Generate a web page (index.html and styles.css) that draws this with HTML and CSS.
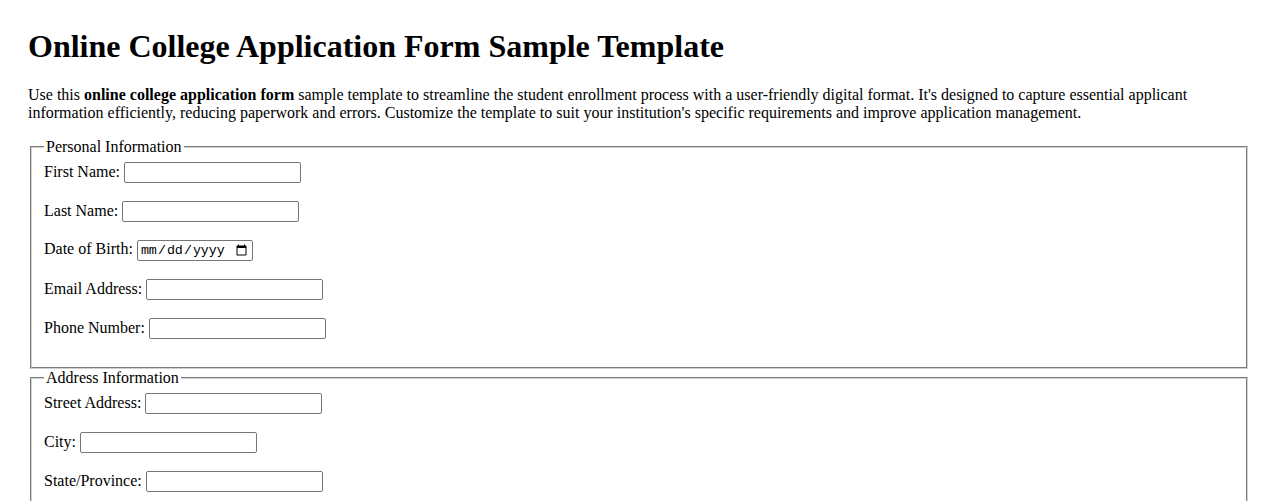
FILE: index.html
```html
<!DOCTYPE html>
<html lang="en">
<head>
<meta charset="utf-8">
<title>Online College Application Form Sample Template</title>
<link rel="stylesheet" href="styles.css">
</head>
<body class="page">
<h1 class="title">Online College Application Form Sample Template</h1>
<p class="intro">Use this <strong>online college application form</strong> sample template to streamline the student enrollment process with a user-friendly digital format. It's designed to capture essential applicant information efficiently, reducing paperwork and errors. Customize the template to suit your institution's specific requirements and improve application management.</p>
<form class="form">
<fieldset class="group">
<legend class="group-title">Personal Information</legend>
<label for="fn">First Name:</label> <input class="field" type="text" id="fn"><br><br>
<label for="ln">Last Name:</label> <input class="field" type="text" id="ln"><br><br>
<label for="dob">Date of Birth:</label> <input class="field date" type="date" id="dob"><br><br>
<label for="em">Email Address:</label> <input class="field" type="email" id="em"><br><br>
<label for="ph">Phone Number:</label> <input class="field" type="tel" id="ph"><br><br>
</fieldset>
<fieldset class="group">
<legend class="group-title">Address Information</legend>
<label for="st">Street Address:</label> <input class="field" type="text" id="st"><br><br>
<label for="ci">City:</label> <input class="field" type="text" id="ci"><br><br>
<label for="sp">State/Province:</label> <input class="field" type="text" id="sp"><br><br>
<label for="zp">Postal Code:</label> <input class="field" type="text" id="zp"><br><br>
<label for="co">Country:</label> <input class="field" type="text" id="co"><br><br>
</fieldset>
</form>
</body>
</html>
```
FILE: styles.css
```css
html, body {
  background: #ffffff;
}
.page {
  margin: 0;
  padding: 28px 28px 20px;
  font-family: "Liberation Serif", "Times New Roman", serif;
  font-size: 16px;
  color: #000000;
}
.title {
  margin: 0 0 21.44px;
  font-size: 32px;
  font-weight: bold;
}
.intro {
  margin: 0 0 16px;
}
.form {
  margin: 0;
}
.group {
  margin: 0 2px;
  padding: 0.35em 0.75em 0.625em;
  border: 2px groove #d0d0d0;
}
.group-title {
  padding: 0 2px;
}
.field {
  font-family: "Liberation Sans", Arial, sans-serif;
  font-size: 13.333px;
  width: 177px;
  height: 21px;
  box-sizing: border-box;
  padding: 1px 2px;
  border: 1px solid #767676;
  border-radius: 2px;
  margin: 0;
}
.date {
  font-family: "Liberation Mono", "Courier New", monospace;
  width: 116px;
}
```
